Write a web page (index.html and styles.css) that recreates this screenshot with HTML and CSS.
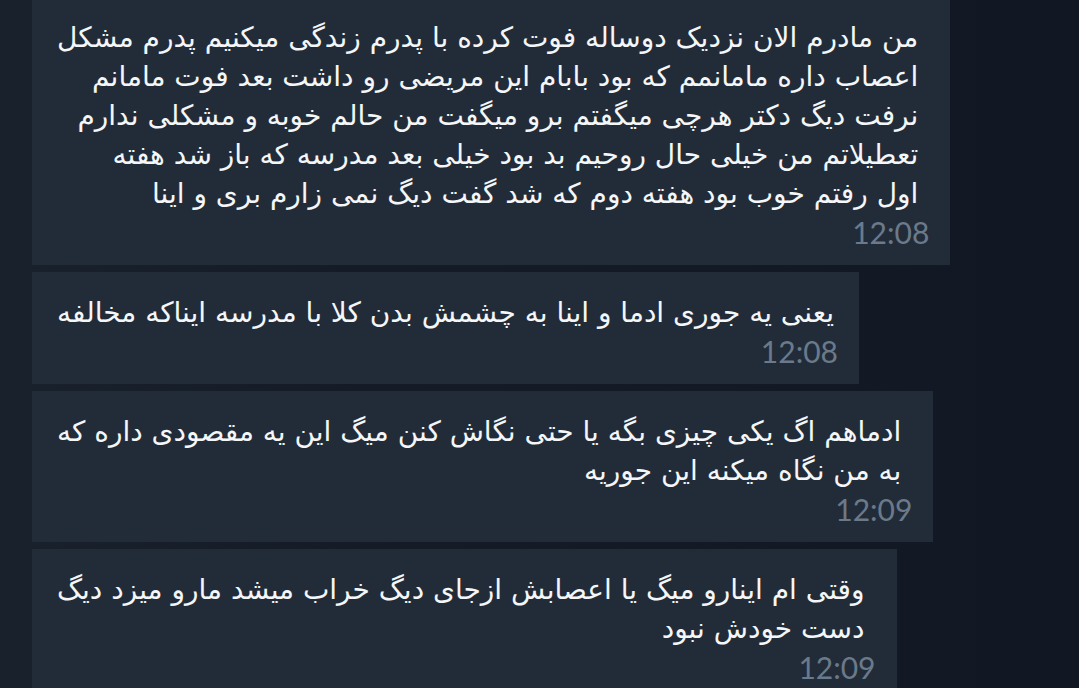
FILE: index.html
```html
<!DOCTYPE html>
<html lang="fa">
<head>
  <meta charset="UTF-8">
  <meta name="viewport" content="width=device-width, initial-scale=1">
  <title>Chat</title>
  <link rel="stylesheet" href="styles.css">
</head>
<body>
  <div class="chat">
    <div class="msg">
      <div class="text" dir="rtl">من مادرم الان نزدیک دوساله فوت کرده با پدرم زندگی میکنیم پدرم مشکل<br>اعصاب داره مامانمم که بود بابام این مریضی رو داشت بعد فوت مامانم<br>نرفت دیگ دکتر هرچی میگفتم برو میگفت من حالم خوبه و مشکلی ندارم<br>تعطیلاتم من خیلی حال روحیم بد بود خیلی بعد مدرسه که باز شد هفته<br>اول رفتم خوب بود هفته دوم که شد گفت دیگ نمی زارم بری و اینا</div>
      <div class="time">12:08</div>
    </div>

    <div class="msg msg-short">
      <div class="text" dir="rtl">یعنی یه جوری ادما و اینا به چشمش بدن کلا با مدرسه ایناکه مخالفه</div>
      <div class="time">12:08</div>
    </div>

    <div class="msg">
      <div class="text" dir="rtl">ادماهم اگ یکی چیزی بگه یا حتی نگاش کنن میگ این یه مقصودی داره که<br>به من نگاه میکنه این جوریه</div>
      <div class="time">12:09</div>
    </div>

    <div class="msg">
      <div class="text" dir="rtl">وقتی ام اینارو میگ یا اعصابش ازجای دیگ خراب میشد مارو میزد دیگ<br>دست خودش نبود</div>
      <div class="time">12:09</div>
    </div>
  </div>
</body>
</html>
```

FILE: styles.css
```css
html, body {
  height: 100%;
}
body {
  margin: 0;
  background: linear-gradient(90deg, #19212c 0%, #151c27 30%, #111823 100%);
  color: #f4f6f8;
  font-family: 'DejaVu Sans', 'Noto Sans', sans-serif;
  overflow: hidden;
}
.chat {
  display: flex;
  flex-direction: column;
  align-items: flex-start;
  gap: 7px;
  margin-top: -3px;
  padding-left: 32px;
}
.msg {
  background: #222c39;
  padding: 21px 21px 14px 25px;
  display: flex;
  flex-direction: column;
  align-items: flex-end;
}
.text {
  font-size: 28px;
  line-height: 39px;
  white-space: nowrap;
  text-align: right;
  padding-right: 11px;
}
.msg-short .text {
  padding-right: 4px;
}
.time {
  font-family: Lato, 'Liberation Sans', sans-serif;
  font-size: 30px;
  line-height: 38px;
  color: #6b7a8a;
}
```
